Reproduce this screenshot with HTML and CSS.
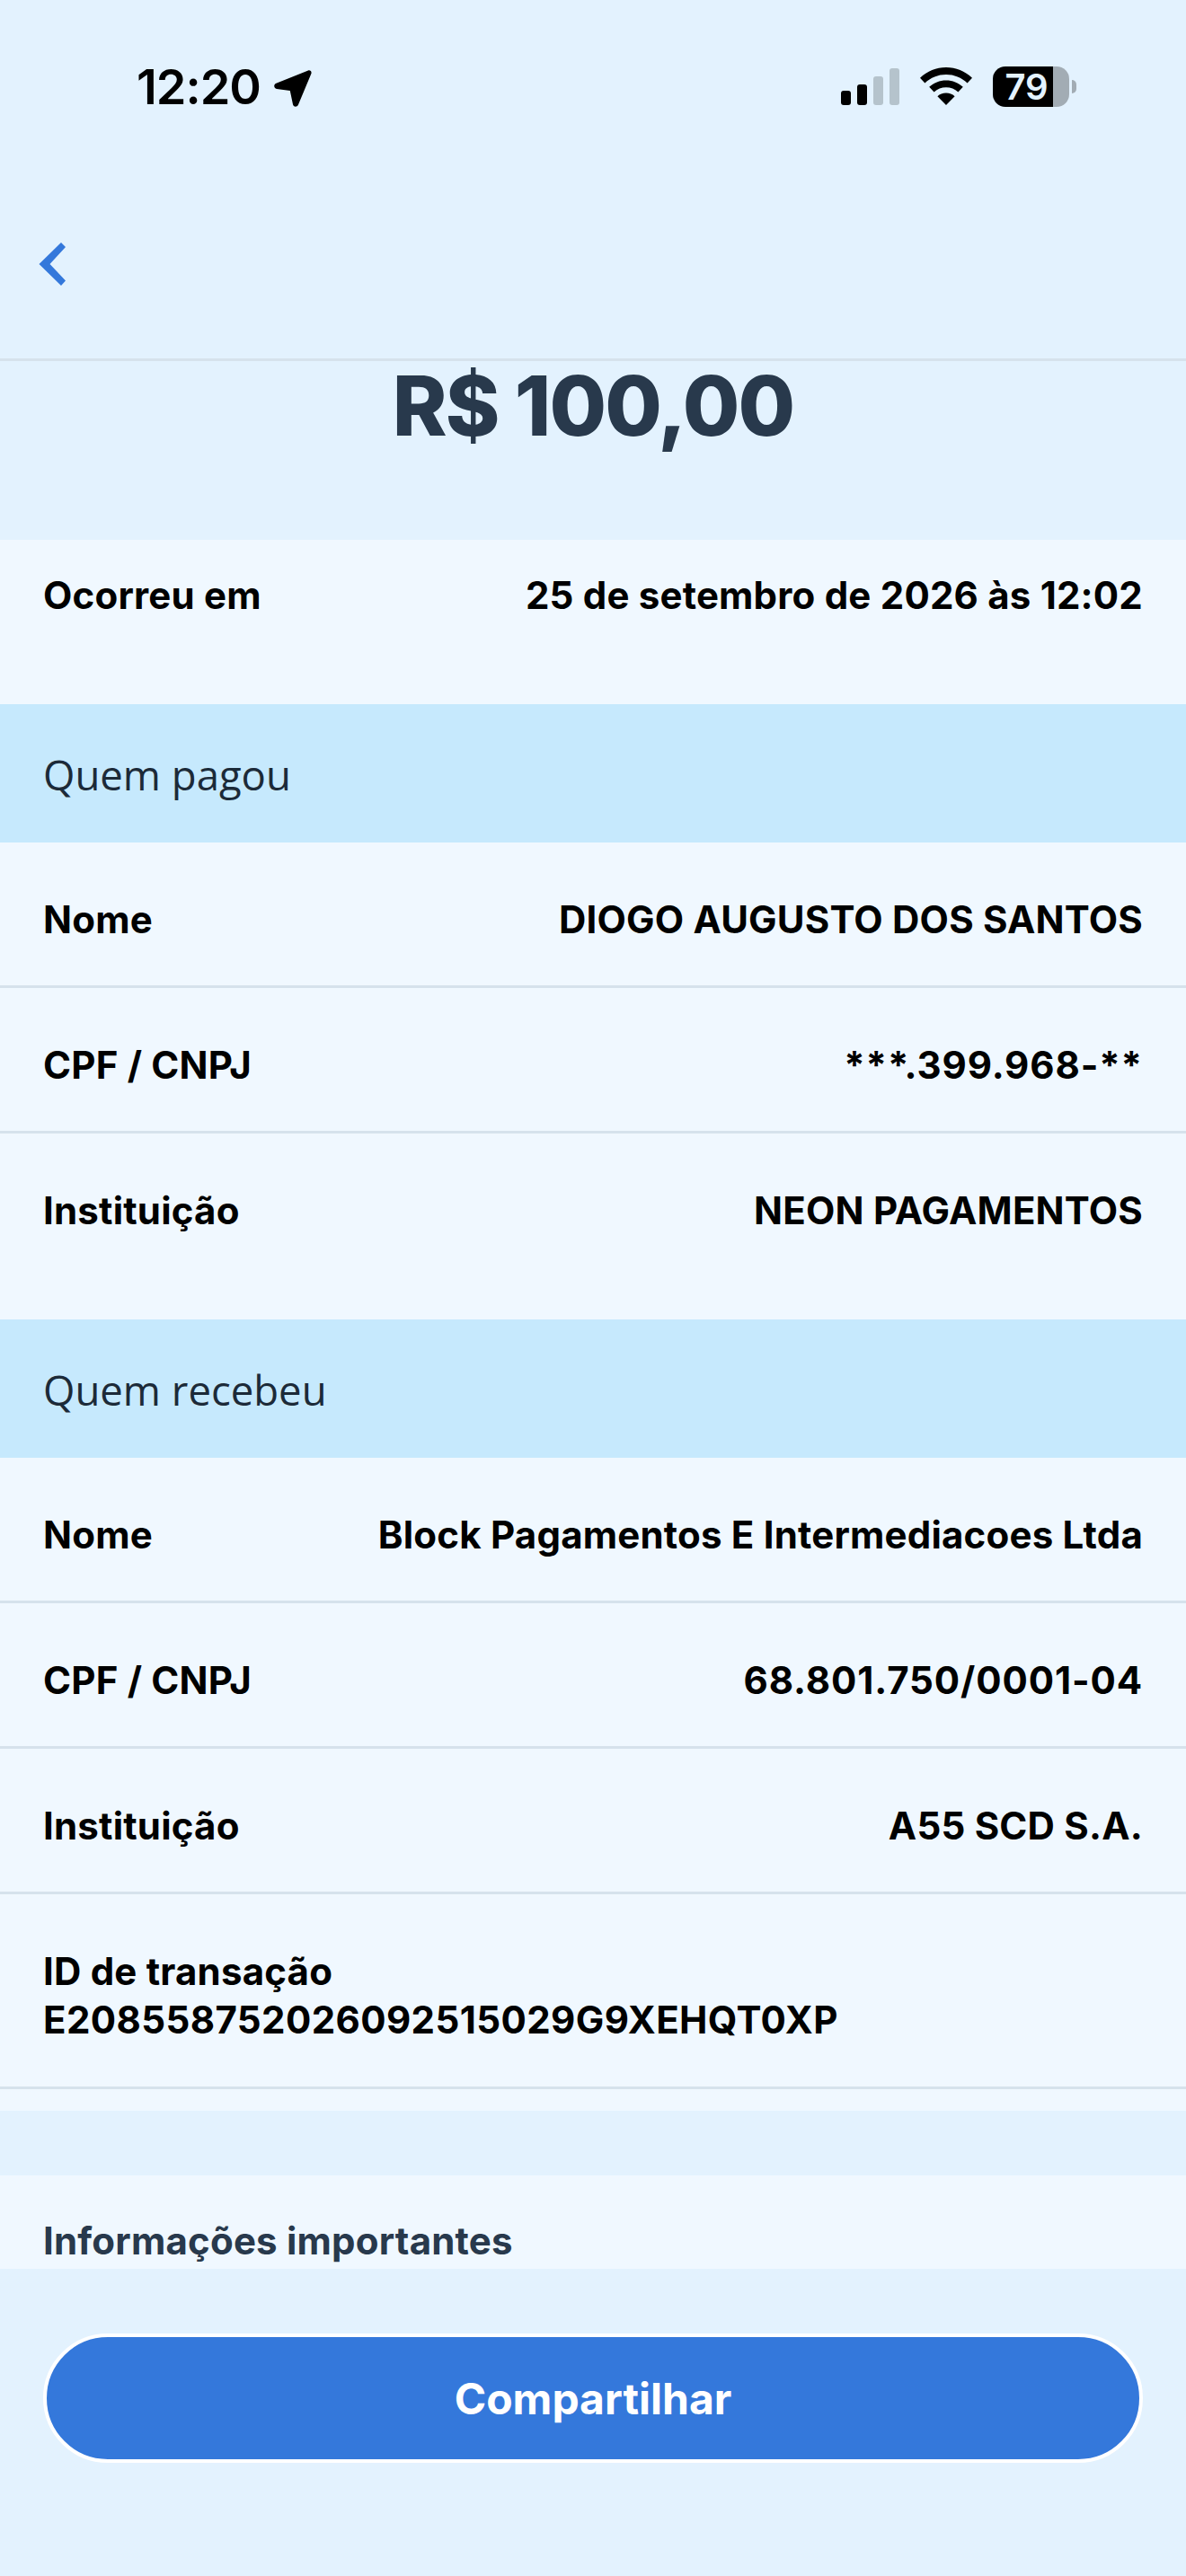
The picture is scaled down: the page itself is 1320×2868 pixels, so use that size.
FILE: index.html
```html
<!DOCTYPE html>
<html lang="pt-BR">
<head>
    <meta charset="UTF-8">
    <meta name="viewport" content="width=device-width, initial-scale=1.0">
    <title>Comprovante</title>
    <link rel="stylesheet" href="styles.css">
</head>
<body>
    <div class="screen">
        <header class="top">
            <div class="status">
                <div class="clock">
                    <span>12:20</span>
                    <svg class="arrow" width="42" height="42" viewBox="0 0 42 42"><path d="M38 0.500c2.200-.8 4.200 1.200 3.400 3.400L27 38.500c-1.200 3-5.400 3-6-.2l-3.200-15.200L3 21c-3.400-.5-3.800-5-.6-6.200z" fill="#000"/></svg>
                </div>
                <div class="indicators">
                    <div class="signal">
                        <i class="bar bar1"></i>
                        <i class="bar bar2"></i>
                        <i class="bar bar3 off"></i>
                        <i class="bar bar4 off"></i>
                    </div>
                    <svg class="wifi" width="58" height="42" viewBox="0 0 58 42"><path d="M29 0c11 0 21 4.200 29 11.800l-5.400 5.600C46.200 11.400 38 8 29 8S11.800 11.400 5.400 17.400L0 11.800C8 4.200 18 0 29 0zM29 14.400c7.200 0 13.600 2.600 18.800 7.400l-5.400 5.600C38.800 24 34 22.200 29 22.200S19.200 24 15.600 27.400l-5.400-5.600c5.200-4.800 11.600-7.400 18.800-7.400zM29 28.600c3.800 0 7 1.300 9.600 3.700L29 42l-9.600-9.700c2.600-2.400 5.800-3.700 9.600-3.700z" fill="#000"/></svg>
                    <div class="battery"><span>79</span></div>
                    <i class="nub"></i>
                </div>
            </div>
            <div class="nav">
                <svg class="back" width="30" height="48" viewBox="0 0 30 48"><polygon points="25,0 30,5 12.500,24 30,42.500 25,48 .5,24" fill="#3478db"/></svg>
            </div>
        </header>

        <div class="amount">R$ 100,00</div>

        <section class="panel">
            <div class="row row-first">
                <span>Ocorreu em</span>
                <span>25 de setembro de 2026 às 12:02</span>
            </div>
        </section>

        <h3 class="band">Quem pagou</h3>
        <section class="panel">
            <div class="row line">
                <span>Nome</span>
                <span>DIOGO AUGUSTO DOS SANTOS</span>
            </div>
            <div class="row line">
                <span>CPF / CNPJ</span>
                <span class="num">***.399.968-**</span>
            </div>
            <div class="row row-end">
                <span>Instituição</span>
                <span>NEON PAGAMENTOS</span>
            </div>
        </section>

        <h3 class="band">Quem recebeu</h3>
        <section class="panel">
            <div class="row line">
                <span>Nome</span>
                <span>Block Pagamentos E Intermediacoes Ltda</span>
            </div>
            <div class="row line">
                <span>CPF / CNPJ</span>
                <span class="num">68.801.750/0001-04</span>
            </div>
            <div class="row line">
                <span>Instituição</span>
                <span>A55 SCD S.A.</span>
            </div>
            <div class="row-id line">
                <div>ID de transação</div>
                <div class="code">E208558752026092515029G9XEHQT0XP</div>
            </div>
            <div class="panel-foot"></div>
        </section>

        <section class="info">Informações importantes</section>

        <footer class="actions">
            <button class="share">Compartilhar</button>
        </footer>
    </div>
</body>
</html>
```

FILE: styles.css
```css
* {
    box-sizing: border-box;
}
body {
    margin: 0;
    background-color: #e3f2fe;
    font-family: Inter, "Liberation Sans", sans-serif;
}
.screen {
    width: 1320px;
    height: 2868px;
    overflow: hidden;
}
.top {
    height: 402px;
    border-bottom: 3px solid #d6e2ec;
}
.status {
    display: flex;
    justify-content: space-between;
    height: 120px;
    padding: 74px 122px 0 152px;
}
.clock {
    display: flex;
    align-items: flex-start;
    gap: 15px;
    font-size: 54px;
    font-weight: 600;
    line-height: 46px;
    letter-spacing: -1px;
    color: #000;
}
.arrow {
    margin-top: 4px;
}
.indicators {
    display: flex;
    align-items: flex-start;
}
.signal {
    display: flex;
    align-items: flex-end;
    gap: 7px;
    height: 43px;
    margin-right: 23px;
}
.bar {
    display: block;
    width: 11px;
    border-radius: 3px;
    background-color: #000;
}
.bar1 { height: 16px; }
.bar2 { height: 23px; }
.bar3 { height: 32px; }
.bar4 { height: 41px; }
.bar.off {
    background-color: #b5c3cc;
}
.wifi {
    margin: 1px 23px 0 0;
}
.battery {
    width: 85px;
    height: 45px;
    border-radius: 14px;
    background: linear-gradient(90deg, #000 67px, #a2acb4 67px);
}
.battery span {
    display: block;
    width: 67px;
    padding-left: 8px;
    text-align: center;
    font-size: 40px;
    font-weight: 600;
    line-height: 45px;
    color: #e3f2fe;
}
.nub {
    width: 5px;
    height: 15px;
    margin: 15px 0 0 3px;
    border-radius: 0 5px 5px 0;
    background-color: #a2acb4;
}
.nav {
    padding: 150px 0 0 43px;
}
.back {
    display: block;
}
.amount {
    height: 199px;
    padding-top: 3px;
    text-align: center;
    font-size: 92px;
    font-weight: 800;
    line-height: 94px;
    letter-spacing: -1.900px;
    color: #28394c;
}
.panel {
    background-color: #f0f8ff;
}
.row {
    display: flex;
    justify-content: space-between;
    padding: 61px 48px 0;
    height: 162px;
    font-size: 42px;
    font-weight: 700;
    line-height: 50px;
    letter-spacing: 0.200px;
    color: #000;
}
.row-first {
    height: 183px;
    padding-top: 37px;
}
.row-end {
    height: 207px;
}
.num {
    letter-spacing: 0.900px;
}
.code {
    letter-spacing: 0.400px;
}
.line {
    border-bottom: 3px solid #d6e2ec;
}
.band {
    margin: 0;
    height: 154px;
    padding: 48px 48px 0;
    background-color: #c6e9fd;
    font-family: "Open Sans", sans-serif;
    font-size: 45.500px;
    font-weight: 400;
    line-height: 60px;
    color: #1c2a38;
}
.row-id {
    height: 217px;
    padding: 59px 48px 0;
    font-size: 42px;
    font-weight: 700;
    line-height: 54px;
    letter-spacing: 0.200px;
    color: #000;
}
.panel-foot {
    height: 24px;
}
.info {
    height: 104px;
    margin-top: 72px;
    padding: 47px 48px 0;
    background-color: #f0f8ff;
    font-size: 42px;
    font-weight: 700;
    line-height: 52px;
    letter-spacing: 0.200px;
    color: #28394c;
}
.actions {
    padding: 72px 48px 0;
}
.share {
    display: block;
    width: 100%;
    height: 144px;
    border: 4px solid #fff;
    border-radius: 72px;
    background-color: #3478db;
    font-family: inherit;
    font-size: 48px;
    font-weight: 700;
    color: #fff;
}
```
